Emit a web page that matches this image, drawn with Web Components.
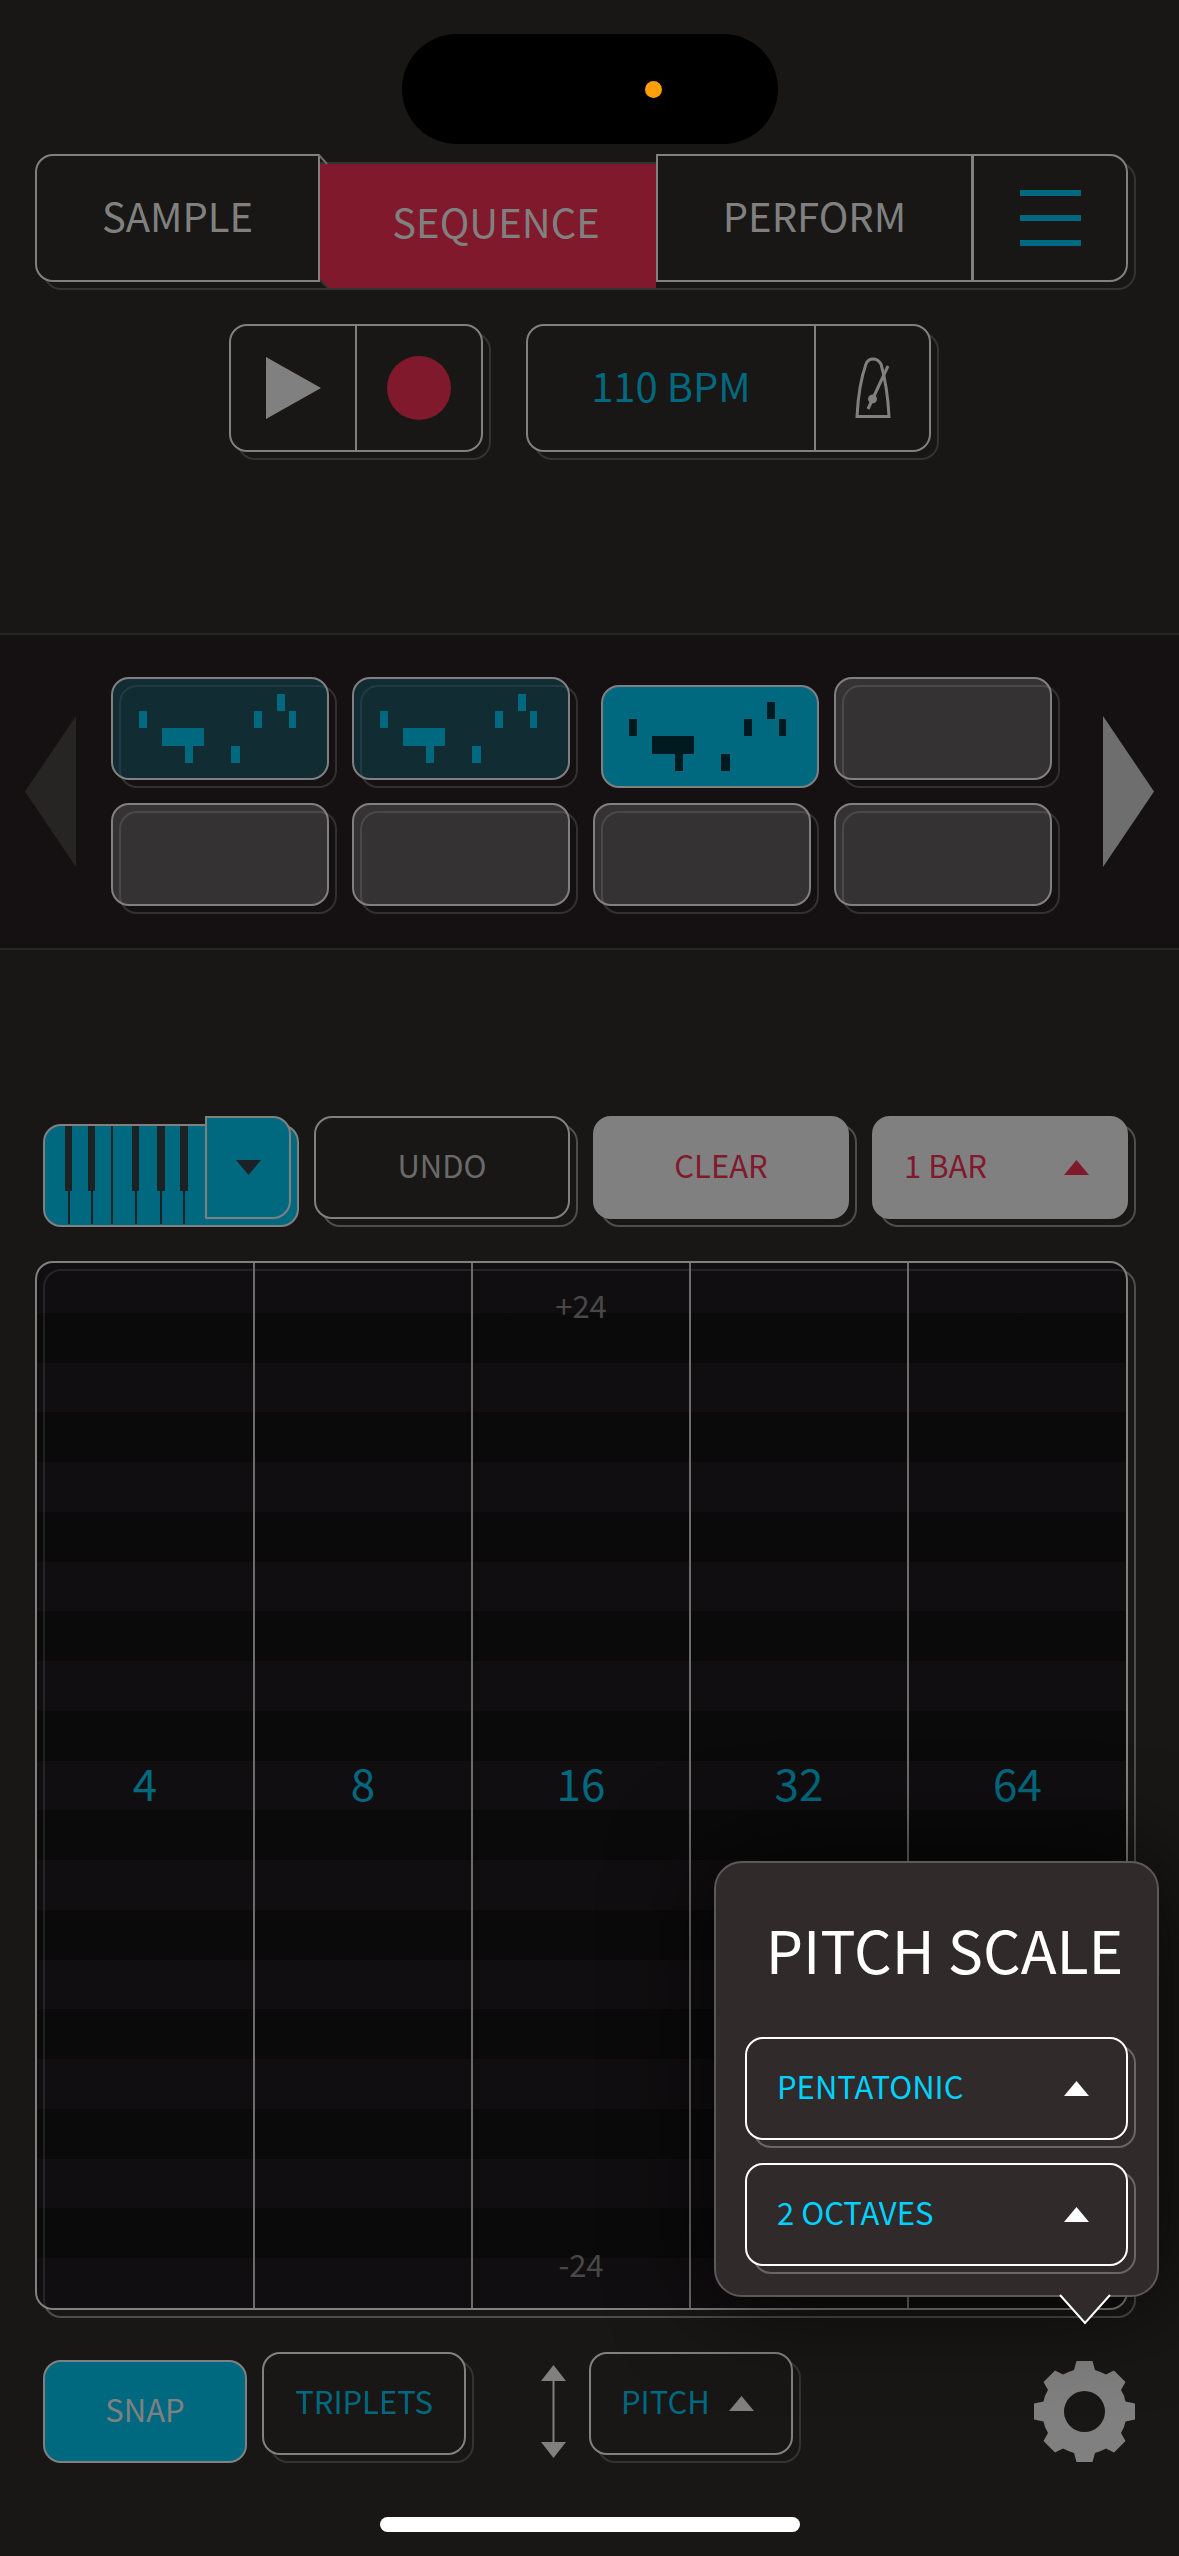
<!DOCTYPE html>
<html lang="en">
<head>
<meta charset="utf-8">
<meta name="viewport" content="width=device-width, initial-scale=1">
<title>Sequencer</title>
<style>
  :root {
    --bg: #181715;
    --line: #808080;
    --line-dim: #343232;
    --line-mid: #4f4d4c;
    --teal: #006980;
    --red: #80192c;
    --offset: 8px;
    --radius: 18px;
    --text-l: 40px;
    --text-m: 31px;
    --text-xl: 59px;
  }
  html { background: var(--bg); }
  body {
    margin: 0;
    background: var(--bg);
    color: var(--line);
    font-family: "Noto Sans CJK JP", Lato, sans-serif;
  }
</style>
</head>
<body>
<sequencer-app></sequencer-app>

<script>
const reset = `
  *, *::before, *::after { box-sizing: border-box; }
  button, select {
    appearance: none; margin: 0; padding: 0; border: 0; border-radius: 0;
    background: none; color: inherit; font: inherit; outline: none; cursor: pointer;
  }
  .text { padding-bottom: 6px; }
  svg { display: block; }
`;

function define(name, html, setup) {
  const template = document.createElement('template');
  template.innerHTML = `<style>${reset}</style>` + html;
  customElements.define(name, class extends HTMLElement {
    constructor() {
      super();
      this.attachShadow({ mode: 'open' }).append(template.content.cloneNode(true));
    }
    connectedCallback() { if (setup) setup(this, this.shadowRoot); }
  });
}

/* A framed face with a second outline dropped behind it. */
define('raised-box', `
  <style>
    :host { display: grid; position: relative; isolation: isolate; height: 103px; }
    :host::before {
      content: ""; position: absolute; z-index: -1;
      inset: var(--offset) calc(-1 * var(--offset)) calc(-1 * var(--offset)) var(--offset);
      border: 2px solid var(--shadow-line, var(--line-dim)); border-radius: var(--radius);
    }
    .face {
      display: flex; min-width: 0; overflow: hidden;
      border: 2px solid var(--line); border-radius: var(--radius);
      background: var(--face, var(--bg));
    }
    :host([pressed]) { transform: translate(var(--offset), var(--offset)); }
    :host([pressed])::before { display: none; }
  </style>
  <div class="face"><slot></slot></div>
`);

define('status-island', `
  <style>
    :host { display: flex; justify-content: center; padding-top: 34px; }
    .pill { display: flex; align-items: center; justify-content: flex-end; width: 376px; height: 110px; padding-right: 116px; border-radius: 55px; background: #000; }
    .dot { width: 17px; height: 17px; border-radius: 50%; background: #ff9f0a; }
  </style>
  <div class="pill"><span class="dot"></span></div>
`);

define('mode-bar', `
  <style>
    :host { display: block; padding: 0 51px 0 35px; font-size: var(--text-l); }
    nav { display: grid; grid-template-columns: 285fr 336fr 317fr 155fr; grid-template-rows: 128px; position: relative; isolation: isolate; }
    nav::before {
      content: ""; position: absolute; z-index: -1;
      inset: var(--offset) calc(-1 * var(--offset)) calc(-1 * var(--offset)) var(--offset);
      border: 2px solid var(--line-dim); border-radius: var(--radius);
    }
    button { border: 2px solid var(--line); background: var(--bg); position: relative; }
    .first { border-radius: var(--radius) 0 0 var(--radius); }
    .menu { display: grid; place-items: center; border-left-width: 1px; border-radius: 0 var(--radius) var(--radius) 0; }
    .active {
      height: 128px; margin-top: var(--offset); padding: 0 0 10px 16px;
      border: solid var(--line-dim); border-width: 2px 0; background: var(--red);
    }
    .active svg { position: absolute; }
    .tl { left: -2px; top: -10px; }
    .bl { left: 0; bottom: 0; }
  </style>
  <nav aria-label="Mode">
    <button class="first text">SAMPLE</button>
    <button class="active" aria-current="page">SEQUENCE
      <svg class="tl" width="12" height="12"><path d="M1 1 9 10" stroke="#6b6b69" stroke-width="2"/></svg>
      <svg class="bl" width="8" height="8"><path d="M0 0 8 8H0Z" fill="#181715"/><path d="M0 0 8 8" stroke="#343232" stroke-width="2"/></svg>
    </button>
    <button class="text">PERFORM</button>
    <button class="menu" aria-label="Menu">
      <svg width="61" height="56" fill="#006980"><path d="M0 0h61v6H0zM0 25h61v6H0zM0 50h61v6H0z"/></svg>
    </button>
  </nav>
`);

define('transport-bar', `
  <style>
    :host { display: flex; justify-content: center; gap: 43px; padding: 42px 19px 0 0; font-size: var(--text-l); }
    raised-box { height: 128px; }
    .keys { width: 254px; }
    .tempo { width: 405px; }
    button { display: grid; place-items: center; flex: 1; }
    button + button { border-left: 2px solid var(--line); }
    .bpm { color: var(--teal); }
    .metronome { flex: 0 0 115px; }
  </style>
  <raised-box class="keys">
    <button aria-label="Play"><svg width="55" height="62" fill="#808080"><path d="M0 0 55 31 0 62Z"/></svg></button>
    <button aria-label="Record"><svg width="64" height="64" fill="#80192c"><circle cx="32" cy="32" r="32"/></svg></button>
  </raised-box>
  <raised-box class="tempo">
    <button class="bpm text">110 BPM</button>
    <button class="metronome" aria-label="Metronome">
      <svg width="36" height="62" fill="none" stroke="#808080" stroke-width="3">
        <path d="M2 59.500H34C33 40 30 21 26 7Q23 2 18 2T11 7C6 21 3 40 2 59.500Z"/>
        <path d="M13 52 33 9"/><circle cx="17.500" cy="42" r="4" fill="#808080" stroke-width="1"/>
      </svg>
    </button>
  </raised-box>
`);

define('pattern-pad', `
  <style>
    :host { display: block; --face: #8080804d; }
    :host([filled]) { --face: #0d475280; }
    :host([current]) { --face: var(--teal); }
    raised-box { --shadow-line: #333032; }
    button { flex: 1; display: flex; padding: 15px 0 0 26px; }
    svg { display: none; fill: var(--teal); }
    :host([filled]) svg, :host([current]) svg { display: block; }
    :host([current]) svg { fill: #001a20; }
  </style>
  <raised-box><button aria-label="Pattern">
    <svg width="158" height="70"><path d="M0 17h8v17H0zM23 34h42v18H54v17h-8V52H23zM92 52h9v17h-9zM115 17h8v17h-8zM138 0h8v17h-8zM150 17h7v17h-7z"/></svg>
  </button></raised-box>
`, (host, root) => root.querySelector('raised-box').toggleAttribute('pressed', host.hasAttribute('current')));

define('pattern-bank', `
  <style>
    :host {
      display: flex; align-items: center; justify-content: space-between;
      margin-top: 181px; padding: 42px 25px; border: solid #272526; border-width: 2px 0; background: #151112;
    }
    .pads { flex: 1; display: grid; grid-template-columns: repeat(4, 1fr); gap: 23px; margin: 0 51px 0 35px; }
  </style>
  <button aria-label="Previous patterns"><svg width="51" height="151" fill="#262523"><path d="M51 0V151L0 75.500Z"/></svg></button>
  <div class="pads">
    <pattern-pad filled></pattern-pad><pattern-pad filled></pattern-pad><pattern-pad current></pattern-pad><pattern-pad></pattern-pad>
    <pattern-pad></pattern-pad><pattern-pad></pattern-pad><pattern-pad></pattern-pad><pattern-pad></pattern-pad>
  </div>
  <button aria-label="Next patterns"><svg width="51" height="151" fill="#6e6e6e"><path d="M0 0 51 75.500 0 151Z"/></svg></button>
`);

/* Framed drop-down; the option text comes from the "value" attribute. */
define('picker-box', `
  <style>
    :host { display: block; font-size: var(--text-m); color: var(--teal); --arrow: var(--line); }
    label { flex: 1; display: grid; align-items: center; min-width: 0; }
    select, svg { grid-area: 1 / 1; }
    select { width: 100%; height: 100%; padding: 0 0 6px 30px; }
    svg { justify-self: end; margin-right: 37px; fill: var(--arrow); pointer-events: none; }
  </style>
  <raised-box><label>
    <select><option></option></select>
    <svg width="25" height="15"><path d="M12.500 0 25 15H0Z"/></svg>
  </label></raised-box>
`, (host, root) => {
  root.querySelector('option').textContent = host.getAttribute('value');
  root.querySelector('select').setAttribute('aria-label', host.getAttribute('name'));
});

define('edit-tools', `
  <style>
    :host {
      display: grid; grid-template-columns: repeat(4, 1fr); gap: 23px;
      margin-top: 166px; padding: 0 51px 0 35px; font-size: var(--text-m);
      --shadow-line: var(--line-mid);
    }
    button { flex: 1; }
    .undo { color: #6a6a6a; }
    .clear { --face: var(--line); color: var(--red); }
    .bars { --face: var(--line); color: var(--red); --arrow: var(--red); }
    .instrument { display: grid; }
    .instrument raised-box { grid-area: 1 / 1; --face: var(--teal); }
    .more {
      grid-area: 1 / 1; justify-self: end; z-index: 1; display: grid; place-items: center;
      width: 86px; border: 2px solid var(--line); border-radius: 0 var(--radius) var(--radius) 0; background: var(--teal);
    }
    .keys { display: flex; padding-left: 20px; }
  </style>
  <div class="instrument">
    <raised-box pressed><button class="keys" aria-label="Keyboard">
      <svg width="124" height="99" fill="#1c2223"><path d="M0 0h7v65H5v33H3V65H0zM23 0h7v65h-2v33h-2V65h-3zM46 0h2v98h-2zM67 0h7v65h-2v33h-2V65h-3zM92 0h8v65h-3v33h-2V65h-3zM115 0h8v65h-3v33h-2V65h-3z"/></svg>
    </button></raised-box>
    <button class="more" aria-label="Choose instrument"><svg width="25" height="15" fill="#1c2223"><path d="M0 0H25L12.500 15Z"/></svg></button>
  </div>
  <raised-box class="undo"><button class="text">UNDO</button></raised-box>
  <raised-box class="clear"><button class="text">CLEAR</button></raised-box>
  <picker-box class="bars" name="Length" value="1 BAR"></picker-box>
`);

define('note-grid', `
  <style>
    :host { display: grid; padding: 42px 51px 0 35px; flex: 1; min-height: 600px; }
    raised-box {
      height: auto; --shadow-line: var(--line-mid);
      --face: repeating-linear-gradient(rgba(11, 8, 12, .6) 0 calc(100% / 21), rgba(1, 1, 3, .6) calc(100% / 21) calc(200% / 21));
    }
    .steps { flex: 1; display: grid; grid-template-columns: 216fr 218fr 218fr 218fr 219fr; }
    button {
      display: grid; grid-template-rows: 1fr auto 1fr; justify-items: center; padding: 22px 0 24px;
      font-size: 44px; line-height: 56px; color: var(--teal);
    }
    button + button { border-left: 2px solid #6c6c6c; }
    button > span { grid-row: 2; padding-bottom: 6px; }
    small { font-size: var(--text-m); line-height: 40px; color: #494849; }
    .top { grid-row: 1; }
    .low { grid-row: 3; align-self: end; }
  </style>
  <raised-box><div class="steps">
    <button><span>4</span></button>
    <button><span>8</span></button>
    <button><small class="top">+24</small><span>16</span><small class="low">-24</small></button>
    <button><span>32</span></button>
    <button><span>64</span></button>
  </div></raised-box>
`);

define('scale-popover', `
  <style>
    :host {
      box-sizing: border-box; display: flex; flex-direction: column; gap: 23px; width: 445px; padding: 0 29px 29px;
      border: 2px solid #5c5859; border-radius: 28px; background: #302a2b;
      box-shadow: 0 0 100px rgba(0, 0, 0, .8);
      --bg: #302a2b; --line: #fff; --shadow-line: #6a6566; --teal: #00d2ff;
    }
    h2 { margin: 0; padding: 20px 0 0 16px; font-size: var(--text-xl); font-weight: 400; line-height: 131px; text-align: center; color: #fff; white-space: nowrap; }
    .tail { position: absolute; right: 46px; bottom: -30px; }
  </style>
  <h2>PITCH SCALE</h2>
  <picker-box name="Scale" value="PENTATONIC"></picker-box>
  <picker-box name="Range" value="2 OCTAVES"></picker-box>
  <svg class="tail" width="52" height="31"><path d="M0 0H52L26 30Z" fill="#302a2b"/><path d="M1 1 26 29 51 1" fill="none" stroke="#fff" stroke-width="2"/></svg>
`);

define('snap-bar', `
  <style>
    :host { display: flex; align-items: flex-start; gap: 23px; padding: 42px 44px 0 35px; font-size: var(--text-m); }
    raised-box, picker-box { width: 204px; }
    button { flex: 1; }
    .snap { --face: var(--teal); }
    .triplets { color: var(--teal); }
    .axis { margin: 13px 0 0 52px; }
    .settings { position: relative; margin: 9px 0 0 auto; height: 101px; }
    scale-popover { position: absolute; z-index: 2; right: -24px; bottom: calc(100% + 64px); }
  </style>
  <raised-box class="snap" pressed><button class="text" aria-pressed="true">SNAP</button></raised-box>
  <raised-box class="triplets"><button class="text">TRIPLETS</button></raised-box>
  <svg class="axis" width="25" height="93" fill="#808080"><path d="M12.500 0 25 16H13.500V77H25L12.500 93 0 77H11.500V16H0Z"/></svg>
  <picker-box name="Lane" value="PITCH"></picker-box>
  <div class="settings">
    <button aria-label="Settings"><svg width="101" height="101" viewBox="-50.500 -50.500 101 101">
      <path fill="#808080" fill-rule="evenodd" d="M-8-50.500H8L10.500-41.500Q16-40 21.500-37L29.500-41 41-29.500 36.500-21.500Q40-16 41-10L50.500-8V8L41 10Q40 16 36.500 21.500L41 29.500 29.500 41 21.500 37Q16 40 10.500 41.500L8 50.500H-8L-10.500 41.500Q-16 40-21.500 37L-29.500 41-41 29.500-36.500 21.500Q-40 16-41 10L-50.500 8V-8L-41-10Q-40-16-36.500-21.500L-41-29.500-29.500-41-21.500-37Q-16-40-10.500-41.500ZM0-20.500A20.500 20.500 0 1 0 0 20.500 20.500 20.500 0 1 0 0-20.500Z"/>
    </svg></button>
    <scale-popover></scale-popover>
  </div>
`);

define('home-indicator', `
  <style>
    :host { display: flex; justify-content: center; padding: 55px 0 24px; }
    span { width: 420px; height: 15px; border-radius: 8px; background: #fff; }
  </style>
  <span></span>
`);

define('sequencer-app', `
  <style>
    :host { display: flex; flex-direction: column; min-height: 100vh; }
    mode-bar { margin-top: 10px; }
  </style>
  <status-island></status-island>
  <mode-bar></mode-bar>
  <transport-bar></transport-bar>
  <pattern-bank></pattern-bank>
  <edit-tools></edit-tools>
  <note-grid></note-grid>
  <snap-bar></snap-bar>
  <home-indicator></home-indicator>
`);
</script>
</body>
</html>
